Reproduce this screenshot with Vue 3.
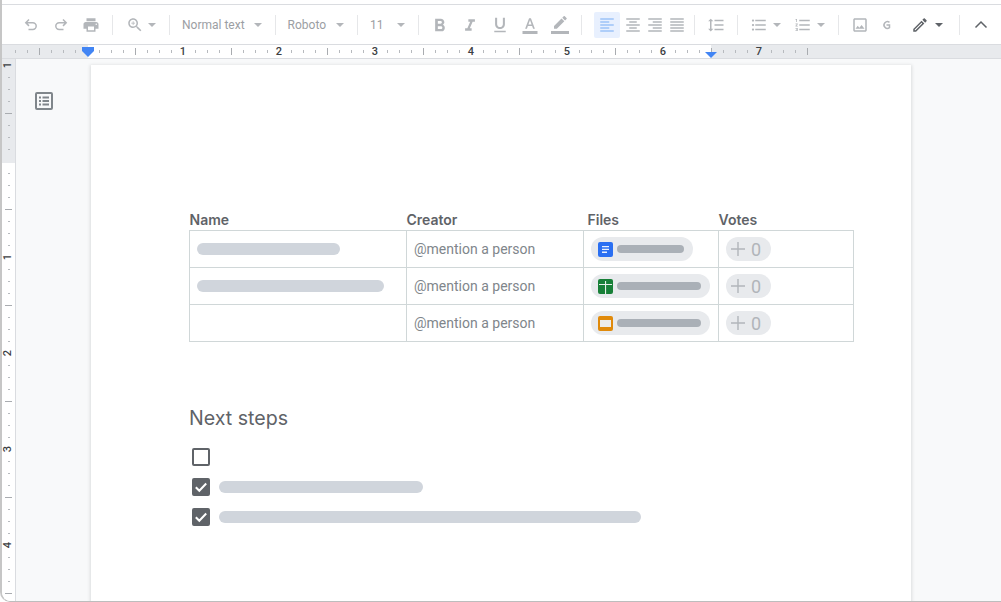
<script setup>
const hTicks = [];
for (let x = 15; x <= 807; x += 12) {
    const fromZero = x - 87;
    let kind = "small";
    let label = "";
    if ((x - 39) % 96 === 0) kind = "major";
    if (fromZero > 0 && fromZero % 96 === 0) {
        kind = "num";
        label = fromZero / 96;
    }
    if (fromZero === 0) kind = "none";
    hTicks.push({ x, kind, label });
}

const vTicks = [];
for (let y = 65; y < 600; y += 12) {
    const fromZero = y - 161;
    let kind = "small";
    let label = "";
    if ((y - 113) % 96 === 0) kind = "major";
    if (fromZero % 96 === 0) {
        kind = "num";
        label = Math.abs(fromZero / 96);
    }
    if (fromZero === 0) kind = "none";
    vTicks.push({ y, kind, label });
}

const rows = [
    { name: 143, file: "doc", bar: 67 },
    { name: 187, file: "sheet", bar: 84 },
    { name: 0, file: "slide", bar: 84 },
];

const steps = [
    { done: false, bar: 0 },
    { done: true, bar: 204 },
    { done: true, bar: 422 },
];
</script>

<template>
    <div class="window">
        <div class="toolbar">
            <div class="group first">
                <svg class="ic" viewBox="0 0 18 18"><path class="line" d="M7 3.5 3.8 6.7 7 9.9M3.8 6.7h7a3.4 3.4 0 0 1 0 6.8H6.5" /></svg>
                <svg class="ic" viewBox="0 0 18 18"><path class="line" d="M11 3.5l3.2 3.2L11 9.9M14.2 6.7h-7a3.4 3.4 0 0 0 0 6.8h4.3" /></svg>
                <svg class="ic" viewBox="0 0 24 24"><path d="M19 8H5c-1.66 0-3 1.34-3 3v6h4v4h12v-4h4v-6c0-1.66-1.34-3-3-3zm-3 11H8v-5h8v5zm3-7c-.55 0-1-.45-1-1s.45-1 1-1 1 .45 1 1-.45 1-1 1zm-1-9H6v4h12V3z" /></svg>
            </div>
            <div class="group zoom">
                <svg class="ic" viewBox="0 0 24 24"><path d="M15.5 14h-.79l-.28-.27C15.41 12.59 16 11.11 16 9.5 16 5.91 13.09 3 9.5 3S3 5.91 3 9.5 5.91 16 9.5 16c1.61 0 3.09-.59 4.23-1.57l.27.28v.79l5 4.99L20.49 19l-4.99-5zm-6 0C7.01 14 5 11.99 5 9.5S7.01 5 9.5 5 14 7.01 14 9.5 11.99 14 9.5 14z" /><path d="M12 10h-2v2H9v-2H7V9h2V7h1v2h2v1z" /></svg>
                <span class="caret"></span>
            </div>
            <div class="group drop">
                <span class="label">Normal text</span>
                <span class="caret"></span>
            </div>
            <div class="group drop font">
                <span class="label">Roboto</span>
                <span class="caret"></span>
            </div>
            <div class="group drop size">
                <span class="label">11</span>
                <span class="caret"></span>
            </div>
            <div class="group format">
                <svg class="ic" viewBox="2.4 1 20 20"><path d="M15.6 10.79c.97-.67 1.65-1.77 1.65-2.79 0-2.26-1.75-4-4-4H7v14h7.04c2.09 0 3.71-1.7 3.71-3.79 0-1.52-.86-2.82-2.15-3.42zM10 6.5h3c.83 0 1.5.67 1.5 1.5s-.67 1.5-1.5 1.5h-3v-3zm3.5 9H10v-3h3.5c.83 0 1.5.67 1.5 1.5s-.67 1.5-1.5 1.5z" /></svg>
                <svg class="ic" viewBox="1 0 22 22"><path d="M10 4v3h2.21l-3.42 8H6v3h8v-3h-2.21l3.42-8H18V4z" /></svg>
                <svg class="ic" viewBox="1 1 22 22"><path d="M12 17c3.31 0 6-2.69 6-6V3h-2.5v8c0 1.93-1.57 3.5-3.5 3.5S8.5 12.93 8.5 11V3H6v8c0 3.31 2.69 6 6 6zm-7 2v2h14v-2H5z" /></svg>
                <svg class="ic" viewBox="0 0 24 24"><path d="M2 20h20v4H2v-4zm3.49-3h2.42l1.27-3.58h5.65L16.09 17h2.42L13.25 3h-2.5L5.49 17zm4.42-5.61l2.03-5.79h.12l2.03 5.79H9.91z" /></svg>
                <svg class="ic" viewBox="0 0 24 24"><path d="M17.75 7L14 3.25l-10 10V17h3.75l10-10zm2.96-2.96c.39-.39.39-1.02 0-1.41L18.37.29c-.39-.39-1.02-.39-1.41 0L15 2.25 18.75 6l1.96-1.96z" /><path d="M0 20h24v4H0z" /></svg>
            </div>
            <div class="group align">
                <span class="active">
                    <svg class="ic" viewBox="0 0 24 24"><path d="M15 15H3v2h12v-2zm0-8H3v2h12V7zM3 13h18v-2H3v2zm0 8h18v-2H3v2zM3 3v2h18V3H3z" /></svg>
                </span>
                <svg class="ic wide" viewBox="0 0 24 24"><path d="M7 15v2h10v-2H7zm-4 6h18v-2H3v2zm0-8h18v-2H3v2zm4-6v2h10V7H7zM3 3v2h18V3H3z" /></svg>
                <svg class="ic wide" viewBox="0 0 24 24"><path d="M3 21h18v-2H3v2zm6-4h12v-2H9v2zm-6-4h18v-2H3v2zm6-4h12V7H9v2zM3 3v2h18V3H3z" /></svg>
                <svg class="ic wide" viewBox="0 0 24 24"><path d="M3 21h18v-2H3v2zm0-4h18v-2H3v2zm0-4h18v-2H3v2zm0-4h18V7H3v2zm0-6v2h18V3H3z" /></svg>
            </div>
            <div class="group spacing">
                <svg class="ic" viewBox="0 0 24 24"><path d="M6 7h2.5L5 3.5 1.5 7H4v10H1.5L5 20.5 8.5 17H6V7zm4-2v2h12V5H10zm0 14h12v-2H10v2zm0-6h12v-2H10v2z" /></svg>
            </div>
            <div class="group lists">
                <svg class="ic" viewBox="0 0 24 24"><path d="M4 10.5c-.83 0-1.5.67-1.5 1.5s.67 1.5 1.5 1.5 1.5-.67 1.5-1.5-.67-1.5-1.5-1.5zm0-6c-.83 0-1.5.67-1.5 1.5S3.17 7.5 4 7.5 5.5 6.83 5.5 6 4.83 4.5 4 4.5zm0 12c-.83 0-1.5.68-1.5 1.5s.68 1.5 1.5 1.5 1.5-.68 1.5-1.5-.67-1.5-1.5-1.5zM7 19h14v-2H7v2zm0-6h14v-2H7v2zm0-8v2h14V5H7z" /></svg>
                <span class="caret"></span>
                <svg class="ic next" viewBox="0 0 24 24"><path d="M2 17h2v.5H3v1h1v.5H2v1h3v-4H2v1zm1-9h1V4H2v1h1v3zm-1 3h1.8L2 13.1v.9h3v-1H3.2L5 10.9V10H2v1zm5-6v2h14V5H7zm0 14h14v-2H7v2zm0-6h14v-2H7v2z" /></svg>
                <span class="caret"></span>
            </div>
            <div class="group tools">
                <svg class="ic" viewBox="0 0 24 24"><path d="M19 5v14H5V5h14m0-2H5c-1.1 0-2 .9-2 2v14c0 1.1.9 2 2 2h14c1.1 0 2-.9 2-2V5c0-1.1-.9-2-2-2zm-4.860 8.860l-3 3.870L9 13.140 6 17h12l-3.860-5.140z" /></svg>
                <svg class="ic cut" viewBox="0 0 18 18"><path class="line" d="M12.500 6.300A3.400 3.400 0 1 0 12.500 11.700V9H9.500" /></svg>
                <svg class="ic dark pencil" viewBox="0 0 24 24"><path d="M14.06 9.02l.92.92L5.92 19H5v-.92l9.06-9.06M17.66 3c-.25 0-.51.1-.7.29l-1.83 1.83 3.75 3.75 1.83-1.83c.39-.39.39-1.02 0-1.41l-2.34-2.34c-.2-.2-.45-.29-.71-.29zm-3.6 3.19L3 17.25V21h3.75L17.81 9.94l-3.75-3.75z" /></svg>
                <span class="caret dark-caret"></span>
            </div>
            <div class="collapse">
                <svg class="ic dark" viewBox="0 0 18 18"><path class="line" d="M3.500 11.500 9 6l5.500 5.500" /></svg>
            </div>
        </div>

        <div class="h-ruler">
            <div v-for="t in hTicks" :key="t.x" class="cell">
                <span v-if="t.kind === 'num'" class="num">{{ t.label }}</span>
                <span v-else-if="t.kind !== 'none'" :class="t.kind"></span>
            </div>
            <span class="left-marker"></span>
            <span class="right-marker"></span>
        </div>

        <div class="main">
            <div class="v-ruler">
                <div v-for="t in vTicks" :key="t.y" class="v-cell">
                    <span v-if="t.kind === 'num'" class="num turned">{{ t.label }}</span>
                    <span v-else-if="t.kind !== 'none'" :class="'v-' + t.kind"></span>
                </div>
            </div>

            <div class="workspace">
                <div class="outline">
                    <svg width="18" height="18" viewBox="0 0 18 18">
                        <rect x="1" y="1" width="16" height="16" rx="1" class="outline-box" />
                        <path d="M4 4.500h2v2H4zM7.500 4.500H14v2H7.500zM4 8h2v2H4zM7.500 8H14v2H7.500zM4 11.500h2v2H4zM7.500 11.500H14v2H7.500z" fill="#80868b" />
                    </svg>
                </div>

                <div class="page">
                    <table>
                        <thead>
                            <tr>
                                <th class="col-name">Name</th>
                                <th class="col-creator">Creator</th>
                                <th class="col-files">Files</th>
                                <th class="col-votes">Votes</th>
                            </tr>
                        </thead>
                        <tbody>
                            <tr v-for="(r, i) in rows" :key="i">
                                <td>
                                    <div v-if="r.name" class="bar" :style="{ width: r.name + 'px' }"></div>
                                </td>
                                <td class="mention">@mention a person</td>
                                <td>
                                    <div class="chip">
                                        <svg v-if="r.file === 'doc'" width="15" height="15" viewBox="0 0 15 15">
                                            <rect width="15" height="15" rx="2" fill="#2a6ff2" />
                                            <path d="M4 4h7v1.300H4zM4 6.800h7v1.300H4zM4 9.600h5v1.300H4z" fill="#e8f0fe" />
                                        </svg>
                                        <svg v-else-if="r.file === 'sheet'" width="15" height="15" viewBox="0 0 15 15">
                                            <rect width="15" height="15" rx="2" fill="#188038" />
                                            <path d="M1 5h13v1.100H1zM7 2h1.100v13H7z" fill="#e6f0e9" />
                                        </svg>
                                        <svg v-else width="15" height="15" viewBox="0 0 15 15">
                                            <rect width="15" height="15" rx="2" fill="#e08a0b" />
                                            <rect x="2" y="4" width="11" height="7" fill="#ececec" />
                                        </svg>
                                        <div class="chip-bar" :style="{ width: r.bar + 'px' }"></div>
                                    </div>
                                </td>
                                <td>
                                    <div class="vote">
                                        <svg width="14" height="14" viewBox="0 0 14 14"><path d="M6.300 0h1.400v6.300H14v1.400H7.700V14H6.300V7.700H0V6.300h6.300z" fill="#b1b5ba" /></svg>
                                        <span>0</span>
                                    </div>
                                </td>
                            </tr>
                        </tbody>
                    </table>

                    <h2>Next steps</h2>
                    <div class="steps">
                        <div v-for="(s, i) in steps" :key="i" class="step">
                            <span class="box" :class="{ done: s.done }">
                                <svg v-if="s.done" width="14" height="14" viewBox="0 0 14 14"><path d="M1.800 7.200 5.300 10.700 12.200 3.500" fill="none" stroke="#fff" stroke-width="2" /></svg>
                            </span>
                            <div v-if="s.bar" class="bar" :style="{ width: s.bar + 'px' }"></div>
                        </div>
                    </div>
                </div>
            </div>
        </div>
    </div>
</template>

<style>
html,
body {
    margin: 0;
    background: #fff;
    overflow: hidden;
}
</style>

<style scoped>
.window {
    width: 1001px;
    height: 602px;
    box-sizing: border-box;
    overflow: hidden;
    display: flex;
    flex-direction: column;
    position: relative;
    padding-top: 4px;
    background: #fff;
    border-left: 2px solid #c6c6c6;
    border-bottom: 1px solid #bdbdbd;
    border-bottom-left-radius: 10px;
    font-family: Roboto, "Liberation Sans", sans-serif;
}

.toolbar {
    height: 41px;
    box-sizing: border-box;
    flex: none;
    display: flex;
    align-items: center;
    padding-left: 20px;
    border-top: 1px solid #dadce0;
    border-bottom: 1px solid #dadce0;
}
.group {
    height: 20px;
    display: flex;
    align-items: center;
    border-right: 1px solid #e6e7e9;
}
.first {
    gap: 12px;
    padding-right: 12px;
}
.zoom {
    padding: 0 13px;
    gap: 4px;
}
.drop {
    padding: 0 13px 0 12px;
    gap: 9px;
}
.font {
    gap: 10px;
}
.size {
    gap: 13px;
}
.format {
    padding: 0 12px;
    gap: 12px;
}
.align {
    padding: 0 6px 0 12px;
}
.spacing {
    padding: 0 12px;
}
.lists {
    padding: 0 13px 0 12px;
    gap: 5px;
}
.lists .next {
    margin-left: 8px;
}
.tools {
    padding: 0 16px 0 12px;
}
.tools .cut {
    margin-left: 8px;
}
.tools .pencil {
    margin-left: 16px;
}
.tools .caret {
    margin-left: 6px;
}
.collapse {
    padding-left: 12px;
    display: flex;
}
.ic {
    width: 18px;
    height: 18px;
    flex: none;
    fill: #b3b6ba;
}
.ic.wide {
    width: 22px;
}
.ic.dark {
    fill: #5f6368;
}
.line {
    fill: none;
    stroke: #b3b6ba;
    stroke-width: 1.5;
}
.dark .line {
    stroke: #5f6368;
}
.active {
    width: 26px;
    height: 26px;
    margin-right: 2px;
    border-radius: 2px;
    background: #e8f0fe;
    display: flex;
    align-items: center;
    justify-content: center;
}
.active .ic {
    fill: #9cc2f7;
}
.label {
    font-size: 12px;
    color: #9b9ea3;
    white-space: nowrap;
}
.caret {
    width: 0;
    height: 0;
    flex: none;
    border-left: 4px solid transparent;
    border-right: 4px solid transparent;
    border-top: 4px solid #b3b6ba;
}
.dark-caret {
    border-top-color: #5f6368;
}

.h-ruler {
    height: 14px;
    flex: none;
    box-sizing: border-box;
    display: flex;
    position: relative;
    padding-left: 7px;
    border-bottom: 1px solid #dadce0;
    background: linear-gradient(90deg, #e8eaed 86px, #fff 86px, #fff 709px, #e8eaed 709px);
}
.cell {
    width: 12px;
    height: 13px;
    flex: none;
    display: flex;
    align-items: center;
    justify-content: center;
    overflow: visible;
}
.small {
    width: 1px;
    height: 3px;
    background: #b7babe;
}
.major {
    width: 1px;
    height: 7px;
    background: #a9acb0;
}
.num {
    font-size: 11px;
    font-weight: 500;
    color: #3c4043;
    line-height: 12px;
}
.left-marker {
    position: absolute;
    left: 80px;
    top: 2px;
    width: 12px;
    height: 4px;
    background: #4285f4;
}
.left-marker::after,
.right-marker {
    content: "";
    position: absolute;
    width: 0;
    height: 0;
    border-left: 6px solid transparent;
    border-right: 6px solid transparent;
    border-top: 6px solid #4285f4;
}
.left-marker::after {
    left: 0;
    top: 4px;
}
.right-marker {
    left: 703px;
    top: 7px;
}

.main {
    flex: 1;
    display: flex;
    min-height: 0;
}
.v-ruler {
    width: 14px;
    flex: none;
    box-sizing: border-box;
    border-right: 1px solid #dadce0;
    background: linear-gradient(180deg, #e8eaed 104px, #fff 104px);
}
.v-cell {
    height: 12px;
    display: flex;
    align-items: center;
    justify-content: center;
}
.v-small {
    width: 2px;
    height: 1px;
    background: #b7babe;
}
.v-major {
    width: 7px;
    height: 1px;
    background: #a9acb0;
}
.turned {
    transform: rotate(-90deg);
}

.workspace {
    flex: 1;
    display: flex;
    align-items: flex-start;
    padding-top: 6px;
    background: #f8f9fa;
}
.outline {
    width: 75px;
    flex: none;
    box-sizing: border-box;
    padding: 27px 0 0 19px;
}
.outline svg {
    display: block;
}
.outline-box {
    fill: none;
    stroke: #80868b;
    stroke-width: 2;
}

.page {
    width: 820px;
    height: 600px;
    flex: none;
    box-sizing: border-box;
    padding: 146px 0 0 98px;
    background: #fff;
    box-shadow: 0 1px 3px 1px rgba(60, 64, 67, 0.15);
}

table {
    border-collapse: collapse;
    table-layout: fixed;
    width: 664px;
}
th {
    height: 19px;
    box-sizing: border-box;
    padding: 0 0 2px;
    text-align: left;
    font-family: Inter, Roboto, sans-serif;
    font-size: 14px;
    font-weight: 600;
    color: #5f6368;
}
.col-name {
    width: 217px;
}
.col-creator {
    width: 177px;
}
.col-files {
    width: 135px;
    padding-left: 4px;
}
.col-votes {
    width: 135px;
}
td {
    height: 36px;
    box-sizing: content-box;
    padding: 0 7px;
    border: 1px solid #d0d7d8;
}
.mention {
    font-size: 14px;
    color: #80868b;
}
.bar {
    height: 12px;
    border-radius: 6px;
    background: #d0d5dc;
}
.chip {
    display: inline-flex;
    align-items: center;
    vertical-align: middle;
    height: 24px;
    gap: 4px;
    padding: 0 9px 0 7px;
    border-radius: 12px;
    background: #e8eaed;
}
.chip-bar {
    height: 8px;
    border-radius: 4px;
    background: #aab0b7;
}
.vote {
    display: inline-flex;
    align-items: center;
    vertical-align: middle;
    height: 24px;
    gap: 6px;
    padding: 0 10px 0 5px;
    border-radius: 12px;
    background: #e8eaed;
    font-size: 18px;
    color: #b1b5ba;
}

h2 {
    margin: 62px 0 16px;
    font-family: Inter, Roboto, sans-serif;
    font-size: 19.6px;
    font-weight: 400;
    line-height: 28px;
    color: #5f6368;
}
.steps {
    display: flex;
    flex-direction: column;
    gap: 12px;
}
.step {
    display: flex;
    align-items: center;
    gap: 9px;
    padding-left: 3px;
    height: 18px;
}
.box {
    width: 18px;
    height: 18px;
    box-sizing: border-box;
    flex: none;
    display: flex;
    align-items: center;
    justify-content: center;
    border: 2px solid #5f6368;
    border-radius: 2px;
}
.box.done {
    background: #5f6368;
}
</style>
